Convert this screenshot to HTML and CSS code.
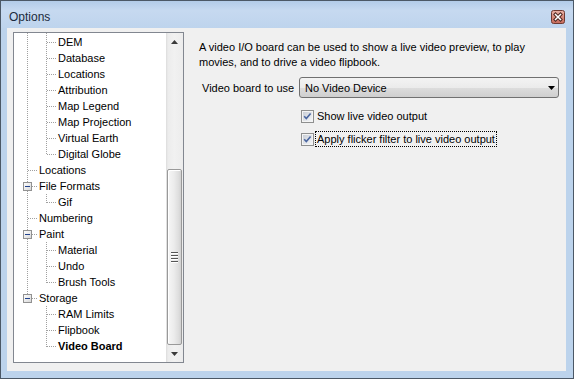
FILE: index.html
```html
<!DOCTYPE html>
<html>
<head>
<meta charset="utf-8">
<link rel="stylesheet" href="styles.css">
</head>
<body>
<div class="window">
  <div class="titlebar">
    <span class="title">Options</span>
    <span class="close">
      <svg width="14" height="14" viewBox="0 0 14 14">
        <defs>
          <linearGradient id="cbg" x1="0" y1="0" x2="0" y2="1">
            <stop offset="0" stop-color="#eab3a8"/>
            <stop offset="0.5" stop-color="#d88a7c"/>
            <stop offset="1" stop-color="#c76a5a"/>
          </linearGradient>
        </defs>
        <rect x="0.5" y="0.5" width="13" height="13" rx="2" fill="url(#cbg)" stroke="#6e3a32"/>
        <path d="M4.5 4.5 L9.5 9.5 M9.5 4.5 L4.5 9.5" stroke="#4b2620" stroke-width="3.4" stroke-linecap="square"/>
        <path d="M4.5 4.5 L9.5 9.5 M9.5 4.5 L4.5 9.5" stroke="#ffffff" stroke-width="1.5" stroke-linecap="square"/>
      </svg>
    </span>
  </div>
  <div class="client">
    <div class="tree">
      <div class="tree-content">
        <svg class="lines" width="152" height="329" viewBox="0 0 152 329">
          <g stroke="#a0a0a0" stroke-width="1" stroke-dasharray="1 1" fill="none">
            <line x1="13.5" y1="0" x2="13.5" y2="261"/>
            <line x1="32.5" y1="0" x2="32.5" y2="122"/>
            <line x1="32.5" y1="161" x2="32.5" y2="170"/>
            <line x1="32.5" y1="209" x2="32.5" y2="250"/>
            <line x1="32.5" y1="273" x2="32.5" y2="314"/>
            <line x1="33" y1="9.5" x2="42" y2="9.5"/>
            <line x1="33" y1="25.5" x2="42" y2="25.5"/>
            <line x1="33" y1="41.5" x2="42" y2="41.5"/>
            <line x1="33" y1="57.5" x2="42" y2="57.5"/>
            <line x1="33" y1="73.5" x2="42" y2="73.5"/>
            <line x1="33" y1="89.5" x2="42" y2="89.5"/>
            <line x1="33" y1="105.5" x2="42" y2="105.5"/>
            <line x1="33" y1="121.5" x2="42" y2="121.5"/>
            <line x1="33" y1="169.5" x2="42" y2="169.5"/>
            <line x1="33" y1="217.5" x2="42" y2="217.5"/>
            <line x1="33" y1="233.5" x2="42" y2="233.5"/>
            <line x1="33" y1="249.5" x2="42" y2="249.5"/>
            <line x1="33" y1="281.5" x2="42" y2="281.5"/>
            <line x1="33" y1="297.5" x2="42" y2="297.5"/>
            <line x1="33" y1="313.5" x2="42" y2="313.5"/>
            <line x1="14" y1="137.5" x2="23" y2="137.5"/>
            <line x1="18" y1="153.5" x2="23" y2="153.5"/>
            <line x1="14" y1="185.5" x2="23" y2="185.5"/>
            <line x1="18" y1="201.5" x2="23" y2="201.5"/>
            <line x1="18" y1="265.5" x2="23" y2="265.5"/>
          </g>
          <defs>
            <linearGradient id="exg" x1="0" y1="0" x2="1" y2="1">
              <stop offset="0" stop-color="#ffffff"/>
              <stop offset="1" stop-color="#d6d6d6"/>
            </linearGradient>
          </defs>
          <g>
            <rect x="9.5" y="149.5" width="8" height="8" fill="url(#exg)" stroke="#919191"/>
            <line x1="11" y1="153.5" x2="16" y2="153.5" stroke="#21428c"/>
            <rect x="9.5" y="197.5" width="8" height="8" fill="url(#exg)" stroke="#919191"/>
            <line x1="11" y1="201.5" x2="16" y2="201.5" stroke="#21428c"/>
            <rect x="9.5" y="261.5" width="8" height="8" fill="url(#exg)" stroke="#919191"/>
            <line x1="11" y1="265.5" x2="16" y2="265.5" stroke="#21428c"/>
          </g>
        </svg>
        <div class="row l1">DEM</div>
        <div class="row l1">Database</div>
        <div class="row l1">Locations</div>
        <div class="row l1">Attribution</div>
        <div class="row l1">Map Legend</div>
        <div class="row l1">Map Projection</div>
        <div class="row l1">Virtual Earth</div>
        <div class="row l1">Digital Globe</div>
        <div class="row l0">Locations</div>
        <div class="row l0">File Formats</div>
        <div class="row l1">Gif</div>
        <div class="row l0">Numbering</div>
        <div class="row l0">Paint</div>
        <div class="row l1">Material</div>
        <div class="row l1">Undo</div>
        <div class="row l1">Brush Tools</div>
        <div class="row l0">Storage</div>
        <div class="row l1">RAM Limits</div>
        <div class="row l1">Flipbook</div>
        <div class="row l1 selected">Video Board</div>
      </div>
      <div class="scrollbar">
        <div class="sb-btn">
          <svg width="7" height="4" viewBox="0 0 7 4"><polygon points="3.5,0 7,4 0,4" fill="#3a3a3a"/></svg>
        </div>
        <div class="sb-track">
          <div class="sb-thumb">
            <div class="grip"><i></i><i></i><i></i><i></i></div>
          </div>
        </div>
        <div class="sb-btn">
          <svg width="7" height="4" viewBox="0 0 7 4"><polygon points="0,0 7,0 3.5,4" fill="#3a3a3a"/></svg>
        </div>
      </div>
    </div>
    <div class="panel">
      <p class="desc">A video I/O board can be used to show a live video preview, to play<br>movies, and to drive a video flipbook.</p>
      <div class="field">
        <span class="label">Video board to use</span>
        <div class="combo">
          <span>No Video Device</span>
          <svg width="7" height="4" viewBox="0 0 7 4"><polygon points="0,0 7,0 3.5,4" fill="#000"/></svg>
        </div>
      </div>
      <div class="check first">
        <svg width="13" height="13" viewBox="0 0 13 13">
          <defs>
            <linearGradient id="ck1" x1="0" y1="0" x2="1" y2="1">
              <stop offset="0" stop-color="#c9ced6"/>
              <stop offset="1" stop-color="#f4f6f8"/>
            </linearGradient>
          </defs>
          <rect x="0.5" y="0.5" width="12" height="12" fill="#f4f4f4" stroke="#8e8f8f"/>
          <rect x="2" y="2" width="9" height="9" fill="url(#ck1)"/>
          <path d="M3.2 6.3 L5.3 8.6 L9.6 3.4" stroke="#4a66a0" stroke-width="1.6" fill="none"/>
        </svg>
        <span class="ctext">Show live video output</span>
      </div>
      <div class="check second">
        <svg width="13" height="13" viewBox="0 0 13 13">
          <defs>
            <linearGradient id="ck2" x1="0" y1="0" x2="1" y2="1">
              <stop offset="0" stop-color="#c9ced6"/>
              <stop offset="1" stop-color="#f4f6f8"/>
            </linearGradient>
          </defs>
          <rect x="0.5" y="0.5" width="12" height="12" fill="#f4f4f4" stroke="#8e8f8f"/>
          <rect x="2" y="2" width="9" height="9" fill="url(#ck2)"/>
          <path d="M3.2 6.3 L5.3 8.6 L9.6 3.4" stroke="#4a66a0" stroke-width="1.6" fill="none"/>
        </svg>
        <span class="ctext focus">Apply flicker filter to live video output</span>
      </div>
    </div>
  </div>
</div>
</body>
</html>
```

FILE: styles.css
```css
html, body {
  margin: 0;
  padding: 0;
}

body {
  font-family: "Liberation Sans", Arial, sans-serif;
  font-size: 11px;
  color: #000;
  background: #fff;
}

.window {
  width: 574px;
  height: 379px;
  box-sizing: border-box;
  border: 1px solid #4b5866;
  background: #bcd3ec;
  display: flex;
  flex-direction: column;
}

.titlebar {
  height: 27px;
  flex: none;
  box-sizing: border-box;
  padding: 4px 8px 0 7px;
  display: flex;
  align-items: center;
  justify-content: space-between;
  background: linear-gradient(to bottom, #b2cbe8 0%, #c6d9f0 35%, #bed4ed 100%);
}

.title {
  font-size: 12px;
  color: #1b2a3c;
  margin-left: 1px;
}

.close {
  display: flex;
  width: 14px;
  height: 14px;
}

.client {
  flex: 1;
  margin: 0 7px 7px 6px;
  background: #f0f0f0;
  display: flex;
  align-items: flex-start;
  box-sizing: border-box;
  padding: 4px 0 0 6px;
}

.tree {
  width: 171px;
  height: 331px;
  box-sizing: border-box;
  border: 1px solid #828790;
  background: #fff;
  display: flex;
  flex: none;
}

.tree-content {
  flex: 1;
  position: relative;
  padding-top: 1px;
  overflow: hidden;
}

.lines {
  position: absolute;
  left: 0;
  top: 0;
}

.row {
  position: relative;
  height: 16px;
  line-height: 16px;
  white-space: nowrap;
}

.l0 {
  padding-left: 25px;
}

.l1 {
  padding-left: 44px;
}

.selected {
  font-weight: bold;
}

.scrollbar {
  width: 17px;
  flex: none;
  display: flex;
  flex-direction: column;
  background: linear-gradient(to right, #dcdcdc 0, #ececec 2px, #f1f1f1 50%, #ececec 100%);
}

.sb-btn {
  height: 17px;
  flex: none;
  display: flex;
  align-items: center;
  justify-content: center;
}

.sb-track {
  flex: 1;
  display: flex;
  flex-direction: column;
  justify-content: flex-end;
}

.sb-thumb {
  height: 176px;
  margin: 0 1px 0 1px;
  box-sizing: border-box;
  border: 1px solid #999;
  border-radius: 2px;
  background: linear-gradient(to right, #f6f6f6 0%, #ececec 45%, #dedede 80%, #d2d2d2 100%);
  box-shadow: inset 1px 1px 0 #fff;
  display: flex;
  align-items: center;
  justify-content: center;
}

.grip {
  display: flex;
  flex-direction: column;
  gap: 1px;
}

.grip i {
  display: block;
  width: 7px;
  height: 1px;
  background: #555;
  border-bottom: 1px solid #fff;
}

.panel {
  flex: 1;
  margin-left: 15px;
  margin-right: 7px;
  padding-top: 8px;
  display: flex;
  flex-direction: column;
}

.desc {
  margin: 0;
  line-height: 15px;
  white-space: nowrap;
}

.field {
  display: flex;
  align-items: center;
  margin-top: 7px;
  height: 21px;
}

.label {
  width: 100px;
  box-sizing: border-box;
  padding-left: 3px;
  flex: none;
}

.combo {
  width: 260px;
  height: 21px;
  box-sizing: border-box;
  border: 1px solid #707070;
  border-radius: 3px;
  background: linear-gradient(to bottom, #f3f3f3 0%, #ebebeb 50%, #dddddd 51%, #cfcfcf 100%);
  display: flex;
  align-items: center;
  justify-content: space-between;
  padding: 0 3px 0 5px;
}

.check {
  display: flex;
  align-items: center;
  height: 16px;
  margin-left: 102px;
}

.check.first {
  margin-top: 10px;
}

.check.second {
  margin-top: 7px;
}

.check svg {
  flex: none;
}

.ctext {
  margin-left: 3px;
  line-height: 14px;
  white-space: nowrap;
}

.ctext.focus {
  margin-left: 1px;
  padding: 0 1px;
  border: 1px dotted #000;
}
```
